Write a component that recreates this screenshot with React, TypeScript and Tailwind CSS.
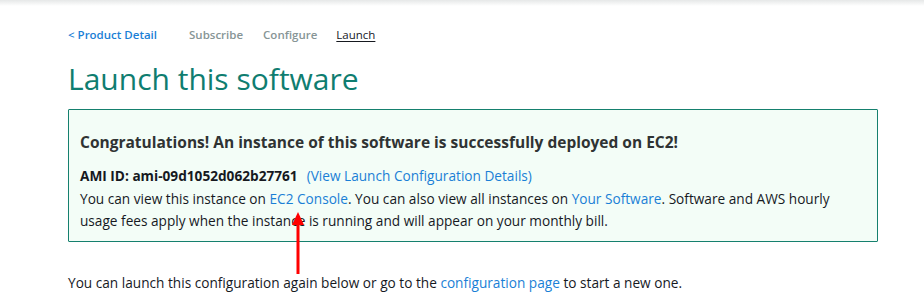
export default function App() {
  const font = { fontFamily: '"Open Sans", Arial, sans-serif' };
  return (
    <div className="relative w-[924px] h-[306px] bg-white overflow-hidden text-[#16191f]" style={font}>
      <div className="h-[6px] bg-gradient-to-b from-[#e6e8e8] to-white" />
      <div className="pl-[68px] pr-[46px]">
        <nav className="flex items-center h-[20px] mt-[19px] text-[11.5px] font-semibold">
          <a className="text-[#1a7fd6]">&lt; Product Detail</a>
          <span className="ml-[32px] text-[#879596]">Subscribe</span>
          <span className="ml-[20px] text-[#879596]">Configure</span>
          <span className="ml-[19px] text-[#16191f] font-normal underline underline-offset-2">Launch</span>
        </nav>
        <h1 className="mt-[14px] text-[30px] leading-[40px] text-[#0f7d70] font-normal">Launch this software</h1>
        <div className="mt-[10px] h-[133px] border border-[#15806e] bg-[#f3fdf7] rounded-[1px] px-[11px] pt-[20px]">
          <div className="text-[15.5px] font-bold leading-[24px] text-[#2f3333]">
            Congratulations! An instance of this software is successfully deployed on EC2!
          </div>
          <div className="mt-[11px] text-[13.65px] leading-[22px]">
            <span className="font-bold">AMI ID: ami-09d1052d062b27761</span>
            <a className="ml-[9px] text-[#1a7fd6]">(View Launch Configuration Details)</a>
          </div>
          <div className="text-[13.65px] leading-[22px] mt-[1px]">
            You can view this instance on <a className="text-[#1a7fd6]">EC2 Console</a>. You can also view all instances on{" "}
            <a className="text-[#1a7fd6]">Your Software</a>. Software and AWS hourly usage fees apply when the instance is
            running and will appear on your monthly bill.
          </div>
        </div>
        <p className="mt-[30px] text-[13.65px] leading-[22px]">
          You can launch this configuration again below or go to the{" "}
          <a className="text-[#1a7fd6]">configuration page</a> to start a new one.
        </p>
      </div>
      <svg className="absolute left-[290px] top-[210px]" width="16" height="66" viewBox="0 0 16 66">
        <polygon points="8,2 14,15 2,15" fill="#ff0000" />
        <rect x="6.5" y="12" width="3" height="52" fill="#ff0000" />
      </svg>
    </div>
  );
}
